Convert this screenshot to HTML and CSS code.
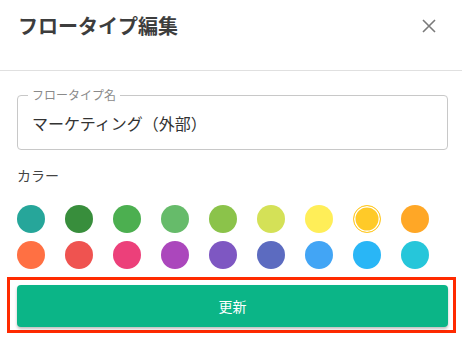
FILE: index.html
```html
<!DOCTYPE html>
<html lang="ja">
<head>
<meta charset="utf-8">
<title>フロータイプ編集</title>
<link rel="stylesheet" href="styles.css">
</head>
<body>
  <div class="dlg-head">
    <h2 class="dlg-title">フロータイプ編集</h2>
    <span class="dlg-close">
      <svg width="14" height="14" viewBox="0 0 14 14"><path d="M1 1L13 13M13 1L1 13" stroke="#7a7a7a" stroke-width="1.6" fill="none"/></svg>
    </span>
  </div>
  <div class="dlg-body">
    <fieldset class="fld">
      <legend class="fld-label">フロータイプ名</legend>
      <div class="fld-value">マーケティング（外部）</div>
    </fieldset>
    <div class="color-label">カラー</div>
    <div class="swatches">
      <span class="sw" style="background:#26a69a"></span>
      <span class="sw" style="background:#388e3c"></span>
      <span class="sw" style="background:#4caf50"></span>
      <span class="sw" style="background:#66bb6a"></span>
      <span class="sw" style="background:#8bc34a"></span>
      <span class="sw" style="background:#d4e157"></span>
      <span class="sw" style="background:#ffee58"></span>
      <span class="sw sel" style="background:#ffca28"></span>
      <span class="sw" style="background:#ffa726"></span>
      <span class="sw" style="background:#ff7043"></span>
      <span class="sw" style="background:#ef5350"></span>
      <span class="sw" style="background:#ec407a"></span>
      <span class="sw" style="background:#ab47bc"></span>
      <span class="sw" style="background:#7e57c2"></span>
      <span class="sw" style="background:#5c6bc0"></span>
      <span class="sw" style="background:#42a5f5"></span>
      <span class="sw" style="background:#29b6f6"></span>
      <span class="sw" style="background:#26c6da"></span>
    </div>
    <div class="mark">
      <button class="btn-update">更新</button>
    </div>
  </div>
</body>
</html>
```

FILE: styles.css
```css
body { margin: 0; background: #fff; font-family: "Noto Sans CJK JP", "Noto Sans", sans-serif; color: #333; }

.dlg-head { height: 71px; box-sizing: border-box; border-bottom: 1px solid #e0e0e0; display: flex; justify-content: space-between; align-items: flex-start; padding: 13px 26px 0 18px; }
.dlg-title { margin: 0; font-size: 20px; line-height: 26px; font-weight: bold; color: #3d3d3d; }
.dlg-close { display: block; width: 14px; height: 14px; margin-top: 6px; }
.dlg-close svg { display: block; }

.dlg-body { padding: 0 14px 0 17px; }

.fld { margin: 16px 0 0; padding: 10px 14px 16px 10px; border: 1px solid #c8c8c8; border-radius: 4px; }
.fld-label { padding: 0 4px; font-size: 12px; line-height: 16px; color: #8a8a8a; }
.fld-value { font-size: 16px; line-height: 20px; color: #333; padding-left: 4px; }

.color-label { margin-top: 15px; font-size: 14px; line-height: 20px; color: #444; }

.swatches { margin-top: 20px; display: grid; grid-template-columns: repeat(9, 28px); column-gap: 20px; row-gap: 8px; }
.sw { display: block; width: 28px; height: 28px; border-radius: 50%; box-sizing: border-box; }
.sw.sel { border: 1px solid #ffca28; box-shadow: inset 0 0 0 1.5px #fff; }

.mark { margin: 8px -8px 0 -10px; border: 3px solid #ff2a00; padding: 5px 5px 3px 7px; }
.btn-update { display: block; width: 100%; height: 42px; border: 0; border-radius: 4px; background: #0bb587; color: #fff; font-family: "Noto Sans CJK JP", sans-serif; font-size: 14px; box-shadow: 0 2px 3px rgba(0,0,0,0.25); }
```
